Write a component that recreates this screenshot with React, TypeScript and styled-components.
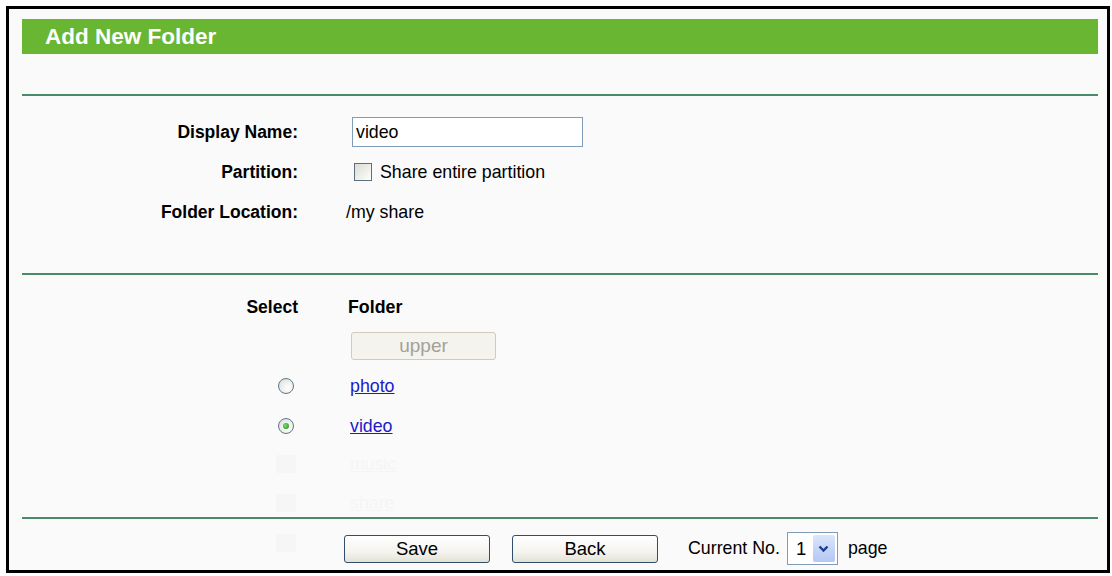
import styled, { createGlobalStyle } from "styled-components";

const GlobalStyle = createGlobalStyle`
  html, body {
    margin: 0;
    padding: 0;
    background: #ffffff;
  }
  body {
    font-family: "Liberation Sans", Arial, sans-serif;
    color: #000;
  }
`;

const Frame = styled.div`
  box-sizing: border-box;
  width: 1104px;
  height: 567px;
  margin: 6px 0 0 6px;
  border: 3px solid #000;
  background: #fafafa;
  padding: 10px 9px 0 13px;
  overflow: hidden;
`;

const TitleBar = styled.div`
  height: 35px;
  background: #68b632;
  color: #fff;
  font-size: 22.5px;
  font-weight: bold;
  line-height: 35px;
  padding-left: 23px;
`;

const Rule = styled.div<{ $top: number }>`
  height: 2px;
  background: #4b8a68;
  margin-top: ${(p) => p.$top}px;
`;

const FormGrid = styled.div`
  display: grid;
  grid-template-columns: 276px 1fr;
  column-gap: 50px;
  grid-auto-rows: 40px;
  padding-top: 16px;
  font-size: 17.8px;
`;

const Label = styled.div`
  display: flex;
  align-items: center;
  justify-content: flex-end;
  font-weight: bold;
  font-size: 17.5px;
`;

const Value = styled.div<{ $shift?: number }>`
  display: flex;
  align-items: center;
  margin-left: ${(p) => p.$shift ?? 0}px;
`;

const TextInput = styled.input`
  box-sizing: border-box;
  width: 231px;
  height: 30px;
  border: 1px solid #7f9db9;
  background: #fff;
  font-family: inherit;
  font-size: 17.8px;
  padding: 0 3px;
  outline: none;
`;

const CheckBox = styled.span`
  box-sizing: border-box;
  width: 18px;
  height: 18px;
  border: 1px solid #5c6f80;
  background: linear-gradient(135deg, #dcdcd6 0%, #f4f4f0 70%, #ffffff 100%);
  margin-right: 8px;
`;

const ListArea = styled.div`
  height: 242px;
  padding-top: 12px;
  box-sizing: border-box;
  overflow: visible;
`;

const ListGrid = styled.div`
  display: grid;
  grid-template-columns: 276px 1fr;
  column-gap: 50px;
  grid-template-rows: 40px 38px 42px 38px 38px 40px 40px;
  font-size: 17.8px;
  height: 276px;
`;

const RadioCell = styled.div`
  display: flex;
  align-items: center;
  justify-content: flex-end;
  padding-right: 4px;
`;

const Radio = styled.span<{ $checked?: boolean }>`
  box-sizing: border-box;
  width: 16px;
  height: 16px;
  border-radius: 50%;
  border: 1.5px solid #5f768b;
  background: radial-gradient(circle at 65% 65%, #ffffff 0%, #ececea 55%, #d6d6d0 100%);
  display: flex;
  align-items: center;
  justify-content: center;

  &::after {
    content: "";
    display: ${(p) => (p.$checked ? "block" : "none")};
    width: 6px;
    height: 6px;
    border-radius: 50%;
    background: radial-gradient(circle at 40% 40%, #7fe07a 0%, #2ea52a 70%);
  }
`;

const GhostBox = styled.span`
  width: 20px;
  height: 18px;
  background: #f6f6f6;
  margin-right: -2px;
`;

const FolderLink = styled.a<{ $ghost?: boolean }>`
  color: ${(p) => (p.$ghost ? "#f5f5f5" : "#1b1bc8")};
  text-decoration: underline;
  margin-left: 2px;
  cursor: pointer;
`;

const UpperButton = styled.button`
  box-sizing: border-box;
  width: 145px;
  height: 28px;
  margin-left: 3px;
  border: 1px solid #cfccb8;
  border-radius: 3px;
  background: #f4f3ee;
  color: #a2a29a;
  font-family: inherit;
  font-size: 19px;
  padding: 0;
`;

const Footer = styled.div`
  display: flex;
  align-items: center;
  padding: 13px 0 0 322px;
  font-size: 17.8px;
`;

const PushButton = styled.button`
  box-sizing: border-box;
  width: 146px;
  height: 28px;
  margin-right: 22px;
  border: 1px solid #2f4e6e;
  border-radius: 3px;
  background: linear-gradient(#ffffff 0%, #f5f4ef 60%, #e4e2d6 100%);
  font-family: inherit;
  font-size: 18.5px;
  color: #000;
  padding: 0;
`;

const PagerText = styled.span<{ $gap: number }>`
  margin-left: ${(p) => p.$gap}px;
`;

const PageSelect = styled.div`
  box-sizing: border-box;
  width: 51px;
  height: 33px;
  margin-left: 7px;
  border: 1px solid #7f9db9;
  background: #fff;
  display: flex;
  align-items: center;
  padding: 2px;
  font-size: 18.5px;
`;

const SelectValue = styled.span`
  flex: 1;
  padding-left: 6px;
`;

const SelectArrow = styled.span`
  width: 22px;
  height: 27px;
  border-radius: 2px;
  background: linear-gradient(#dbe6fb 0%, #c3d3f6 60%, #b4c8f3 100%);
  display: flex;
  align-items: center;
  justify-content: center;
`;

const ghostRows = ["music", "share", "files"];

export default function App() {
  return (
    <>
      <GlobalStyle />
      <Frame>
        <TitleBar>Add New Folder</TitleBar>
        <Rule $top={40} />
        <FormGrid>
          <Label>Display Name:</Label>
          <Value $shift={4}>
            <TextInput defaultValue="video" />
          </Value>
          <Label>Partition:</Label>
          <Value $shift={6}>
            <CheckBox />
            Share entire partition
          </Value>
          <Label>Folder Location:</Label>
          <Value $shift={-2}>/my share</Value>
        </FormGrid>
        <Rule $top={41} />
        <ListArea>
          <ListGrid>
            <Label>Select</Label>
            <Value>
              <b>Folder</b>
            </Value>
            <div />
            <Value>
              <UpperButton disabled>upper</UpperButton>
            </Value>
            <RadioCell>
              <Radio />
            </RadioCell>
            <Value>
              <FolderLink>photo</FolderLink>
            </Value>
            <RadioCell>
              <Radio $checked />
            </RadioCell>
            <Value>
              <FolderLink>video</FolderLink>
            </Value>
            {ghostRows.map((name) => (
              <>
                <RadioCell key={name + "-r"}>
                  <GhostBox />
                </RadioCell>
                <Value key={name + "-v"}>
                  <FolderLink $ghost>{name}</FolderLink>
                </Value>
              </>
            ))}
          </ListGrid>
        </ListArea>
        <Rule $top={0} />
        <Footer>
          <PushButton>Save</PushButton>
          <PushButton>Back</PushButton>
          <PagerText $gap={8}>Current No.</PagerText>
          <PageSelect>
            <SelectValue>1</SelectValue>
            <SelectArrow>
              <svg width="11" height="8" viewBox="0 0 11 8">
                <path d="M1.5 1.5 L5.5 5.5 L9.5 1.5" fill="none" stroke="#1d3f8f" strokeWidth="2.4" />
              </svg>
            </SelectArrow>
          </PageSelect>
          <PagerText $gap={10}>page</PagerText>
        </Footer>
      </Frame>
    </>
  );
}
